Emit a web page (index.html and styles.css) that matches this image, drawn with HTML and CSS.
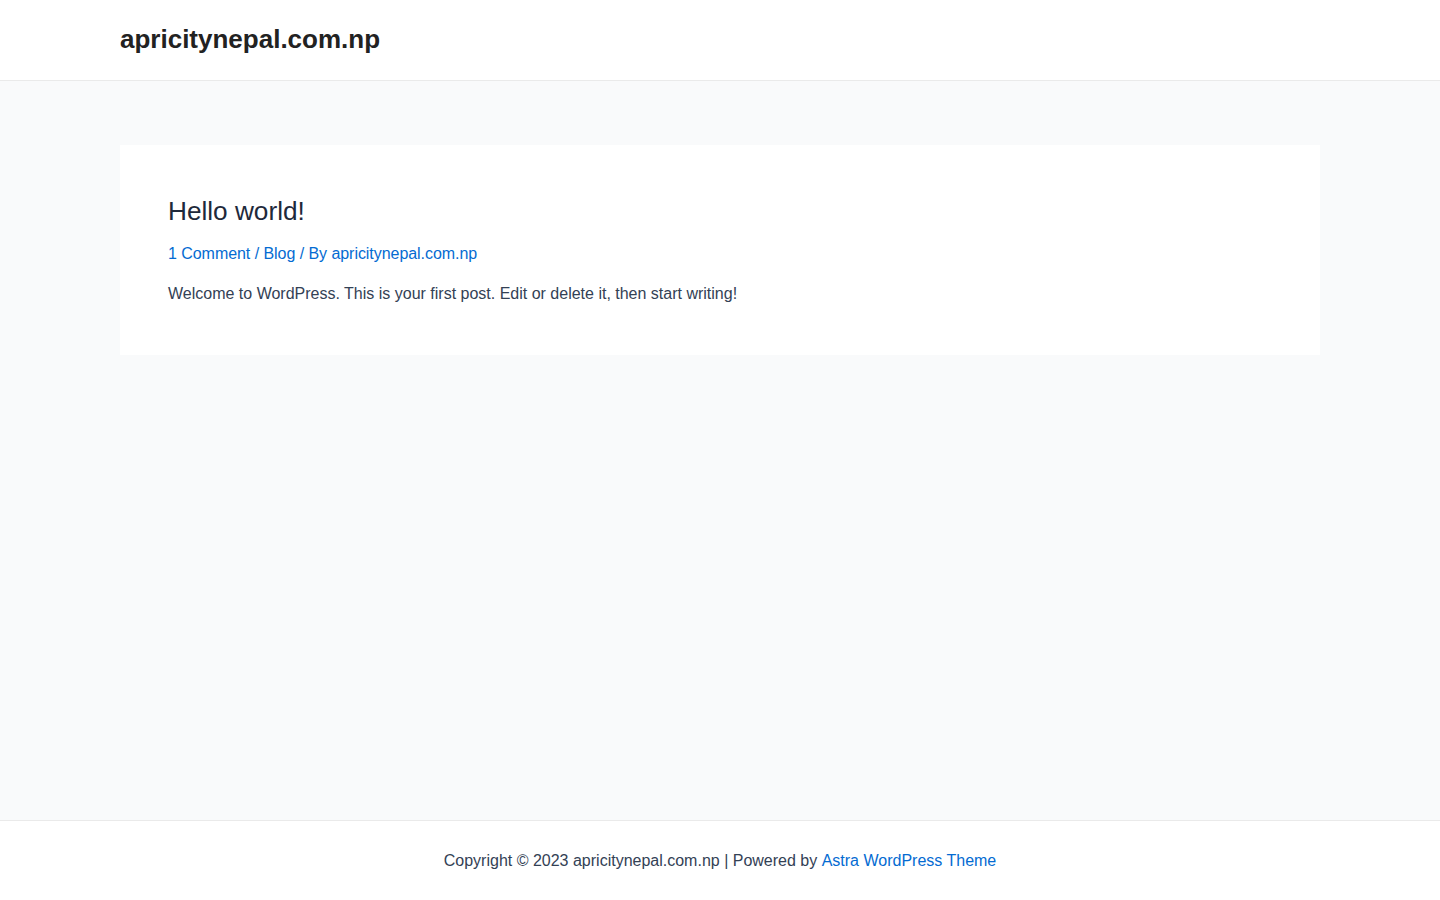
FILE: index.html
```html
<!DOCTYPE html>
<html lang="en">
<head>
<meta charset="utf-8">
<title>apricitynepal.com.np</title>
<link rel="stylesheet" href="styles.css">
</head>
<body>
<div class="page">
  <header class="site-header">
    <div class="container header-inner">
      <a class="site-title" href="#">apricitynepal.com.np</a>
    </div>
  </header>
  <main class="site-main">
    <div class="container">
      <article class="post">
        <h2 class="entry-title">Hello world!</h2>
        <div class="entry-meta">
          <a href="#">1 Comment</a> / <a href="#">Blog</a> / By <a href="#">apricitynepal.com.np</a>
        </div>
        <p class="entry-content">Welcome to WordPress. This is your first post. Edit or delete it, then start writing!</p>
      </article>
    </div>
  </main>
  <footer class="site-footer">
    <div class="footer-inner">Copyright © 2023 apricitynepal.com.np | Powered by <a href="#">Astra WordPress Theme</a></div>
  </footer>
</div>
</body>
</html>
```
FILE: styles.css
```css
* { box-sizing: border-box; }
html, body { margin: 0; padding: 0; }
body {
  font-family: "Liberation Sans", Arial, sans-serif;
  font-size: 16px;
  color: #334155;
  background: #ffffff;
}
a { color: #046bd2; text-decoration: none; }
.page {
  min-height: 100vh;
  display: flex;
  flex-direction: column;
}
.container {
  width: 1200px;
  margin: 0 auto;
}
.site-header {
  background: #ffffff;
  border-bottom: 1px solid #eaeaea;
}
.header-inner {
  height: 80px;
  display: flex;
  align-items: center;
}
.site-title {
  font-size: 26px;
  font-weight: 700;
  color: #222222;
  line-height: 1;
  margin-top: -2px;
}
.site-main {
  flex: 1;
  background: #f9fafb;
  padding-top: 64px;
}
.post {
  background: #ffffff;
  padding: 48px 48px 49px;
}
.entry-title {
  margin: 0;
  font-size: 26.2px;
  font-weight: 400;
  color: #1e293b;
  line-height: 36px;
}
.entry-meta {
  margin-top: 13px;
  line-height: 24px;
  color: #046bd2;
  letter-spacing: -0.05px;
}
.entry-content {
  margin: 16px 0 0;
  line-height: 24px;
}
.site-footer {
  background: #ffffff;
  border-top: 1px solid #eaeaea;
}
.footer-inner {
  height: 79px;
  display: flex;
  align-items: center;
  justify-content: center;
  color: #334155;
  white-space: pre;
}
```
